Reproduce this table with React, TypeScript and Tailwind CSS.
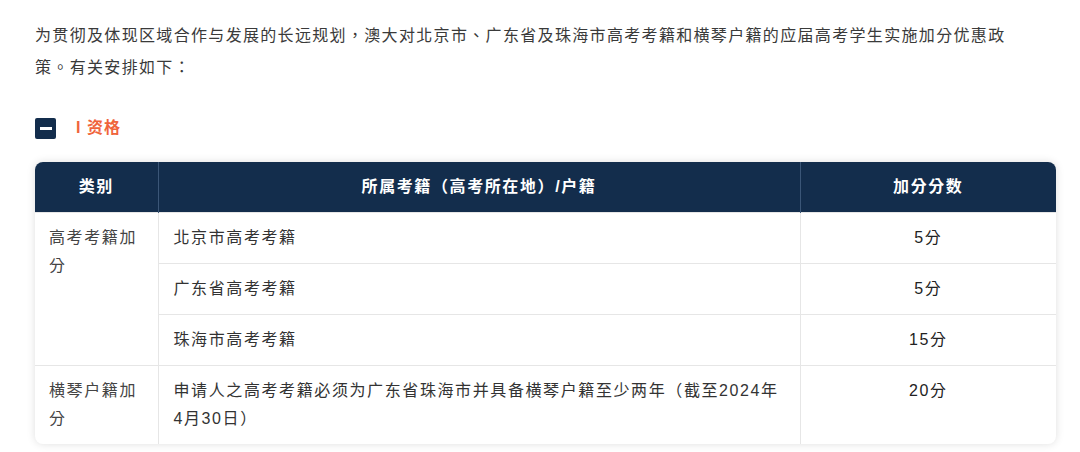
import React from "react";

type Row = {
  category?: string;
  span?: number;
  place: string;
  score: string;
};

const rows: Row[] = [
  { category: "高考考籍加分", span: 3, place: "北京市高考考籍", score: "5分" },
  { place: "广东省高考考籍", score: "5分" },
  { place: "珠海市高考考籍", score: "15分" },
  {
    category: "横琴户籍加分",
    span: 1,
    place: "申请人之高考考籍必须为广东省珠海市并具备横琴户籍至少两年（截至2024年4月30日）",
    score: "20分",
  },
];

function SectionTitle() {
  return (
    <div className="flex items-center gap-5 mt-[32px]">
      <div className="w-[21px] h-[21px] rounded-[2px] bg-[#132d4c] flex items-center justify-center">
        <div className="w-[12px] h-[3px] bg-white" />
      </div>
      <p className="text-[16px] font-bold text-[#f0643c] tracking-[1px]">I 资格</p>
    </div>
  );
}

export default function App() {
  return (
    <div
      className="min-h-screen bg-white px-[35px] pt-[20px] text-[#333]"
      style={{ fontFamily: '"Liberation Sans", "Noto Sans CJK TC", sans-serif' }}
    >
      <p className="text-[16px] leading-[32px] tracking-[1.33px] text-[#3a3a3a]">
        为贯彻及体现区域合作与发展的长远规划，澳大对北京市、广东省及珠海市高考考籍和横琴户籍的应届高考学生实施加分优惠政
        <br />
        策。有关安排如下：
      </p>

      <SectionTitle />

      <div className="mt-[22px] w-[1021px] rounded-[8px] overflow-hidden shadow-[0_0_8px_rgba(0,0,0,0.13)]">
        <table className="w-full border-collapse text-[16px] tracking-[1.6px]">
          <thead>
            <tr className="h-[50px] bg-[#132d4c] text-white font-bold text-[16px]">
              <th className="w-[123px] border-r border-[#3b5677] font-bold">类别</th>
              <th className="w-[642px] border-r border-[#3b5677] font-bold">所属考籍（高考所在地）/户籍</th>
              <th className="font-bold">加分分数</th>
            </tr>
          </thead>
          <tbody>
            {rows.map((r, i) => (
              <tr key={i} className="border-t border-[#e6e6e6]">
                {r.category && (
                  <td
                    rowSpan={r.span}
                    className="align-top px-[14px] py-[11px] leading-[28px] border-r border-[#e6e6e6] text-[#444]"
                  >
                    {r.category}
                  </td>
                )}
                <td className="px-[15px] py-[11px] leading-[28px] border-r border-[#e6e6e6] text-[#333] align-top">
                  {r.place}
                </td>
                <td className="px-[15px] py-[11px] leading-[28px] text-center text-[#222] align-top">
                  {r.score}
                </td>
              </tr>
            ))}
          </tbody>
        </table>
      </div>
    </div>
  );
}
